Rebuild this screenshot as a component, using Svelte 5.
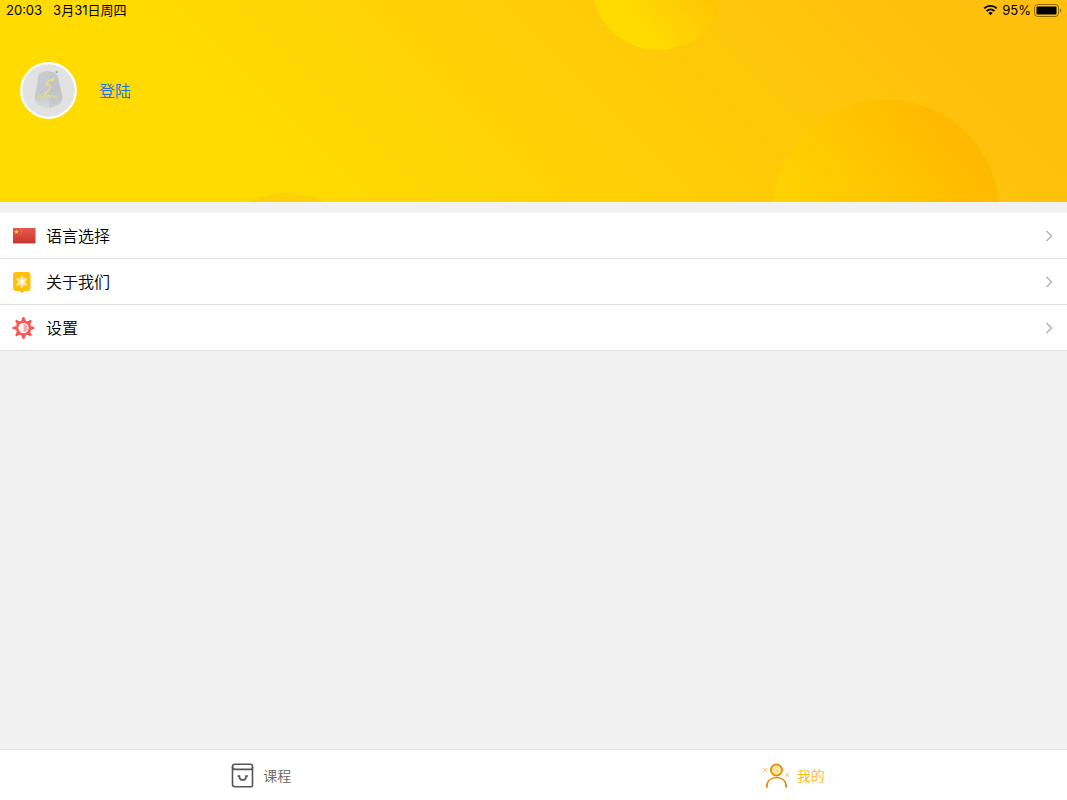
<script>
  const rows = [
    { id: 'language', label: '语言选择' },
    { id: 'about', label: '关于我们' },
    { id: 'settings', label: '设置' },
  ];
  const teeth = [0, 45, 90, 135, 180, 225, 270, 315];
  let tab = $state('mine');
</script>

<div class="screen">
  <header class="hero">
    <svg class="backdrop" viewBox="0 0 1067 202" preserveAspectRatio="xMidYMid slice" aria-hidden="true">
      <defs>
        <linearGradient id="sky" gradientUnits="userSpaceOnUse" x1="200" y1="100" x2="600" y2="-300">
          <stop offset="0" stop-color="#ffdb00" />
          <stop offset="1" stop-color="#ffc00d" />
        </linearGradient>
        <linearGradient id="top" gradientUnits="userSpaceOnUse" x1="640" y1="30" x2="700" y2="-20">
          <stop offset="0" stop-color="#ffdb00" />
          <stop offset="1" stop-color="#ffc305" />
        </linearGradient>
        <linearGradient id="right" gradientUnits="userSpaceOnUse" x1="785" y1="215" x2="925" y2="105">
          <stop offset="0" stop-color="#ffd400" />
          <stop offset="1" stop-color="#ffba00" />
        </linearGradient>
      </defs>
      <rect width="1067" height="202" fill="url(#sky)" />
      <circle cx="658" cy="-16" r="66" fill="url(#top)" />
      <circle cx="886" cy="213" r="113.500" fill="url(#right)" />
      <circle cx="287" cy="273" r="80" fill="#ffd008" />
    </svg>

    <div class="status">
      <span class="clock">20:03</span>
      <span class="date">3月31日周四</span>
      <svg class="wifi" width="15" height="12" viewBox="0 0 16 12" fill="none" stroke="#000" stroke-width="2" aria-hidden="true">
        <path d="M1.200 4.300C5 .7 11 .7 14.800 4.300" />
        <path d="M3.800 7.100c2.400-2.200 6-2.200 8.400 0" />
        <path d="M5.700 9.100c1.300-1.200 3.300-1.200 4.600 0L8 11.500z" fill="#000" stroke="none" />
      </svg>
      <span class="charge">95%</span>
      <svg class="battery" width="28" height="13" viewBox="0 0 28 13" aria-hidden="true">
        <rect x=".5" y=".5" width="24" height="12" rx="3.300" fill="none" stroke="#000" stroke-opacity=".45" />
        <rect x="2.500" y="2.500" width="20" height="8" rx="1" />
        <path d="M26 4.300c1.600.8 1.600 3.600 0 4.400z" opacity=".5" />
      </svg>
    </div>

    <div class="profile">
      <svg class="avatar" viewBox="0 0 57 57" aria-hidden="true">
        <defs>
          <linearGradient id="stone" x1="0" y1="0" x2="0" y2="1">
            <stop offset="0" stop-color="#c8ccd0" />
            <stop offset=".7" stop-color="#c6c9cb" />
            <stop offset="1" stop-color="#dcdddd" />
          </linearGradient>
        </defs>
        <circle cx="28.500" cy="28.500" r="27.300" fill="#e2e2e2" stroke="#fff" stroke-width="2.200" />
        <path d="M18 15l2-4 4-1.500 3-.5 6 1 5 4 1 7 3 11c1 4-.5 8-3 10-3 2.500-6 3.500-10 4-5-.5-9-1.500-12-4-2-2-3-5-2-9l2-9z" fill="url(#stone)" />
        <path d="M29 9.500l4 .5 5 4 1 7 3 11c1 4-.5 8-3 10-3 2.500-6 3.500-10 4z" fill="#b8bec3" opacity=".4" />
        <circle cx="36.500" cy="10" r="1.100" fill="#969ca2" />
        <g fill="none" stroke="#eadc92" stroke-linecap="round" stroke-linejoin="round">
          <path d="M34 16l-6 3 6-1M28 19l-2 4c5-1 7 1 1 7l-2 1" stroke-width="1.300" />
          <path d="M19 33l-1 3M21 35c4 0 4-4 1-3-3 1-3 5 1 4l4-7-2 7c2 0 2-3 4-3-3 0-3 4 0 2l1-2v3c1-2 3-4 3-2v2c1-2 3-3 4-2-3 1-2 3 2 1" stroke-width=".9" />
        </g>
      </svg>
      <a class="login" href="#login">登陆</a>
    </div>
  </header>

  <main>
    <nav class="list">
      {#each rows as row}
        <a class="row" href={'#' + row.id}>
          <span class="badge">
            {#if row.id === 'language'}
              <svg width="24" height="24" viewBox="0 0 24 24" aria-hidden="true">
                <defs>
                  <linearGradient id="flag" x1="0" y1="0" x2="0" y2="1">
                    <stop offset="0" stop-color="#e4594c" />
                    <stop offset="1" stop-color="#c9372d" />
                  </linearGradient>
                </defs>
                <rect x="1" y="4" width="22.500" height="15" fill="url(#flag)" />
                <path d="M1 19.200h22.500" stroke="#a83b34" stroke-width=".6" />
                <path d="M4.500 5.400l.7 1.600 1.800.1-1.400 1.200.5 1.700-1.600-1-1.600 1 .5-1.700L2 7.100l1.800-.1z" fill="#ffd34f" />
                <g fill="#ec8138">
                  <circle cx="8" cy="5.500" r=".7" /><circle cx="9.500" cy="7" r=".7" />
                  <circle cx="9.500" cy="9" r=".7" /><circle cx="8" cy="10.500" r=".7" />
                </g>
              </svg>
            {:else if row.id === 'about'}
              <svg width="24" height="24" viewBox="0 0 24 24" aria-hidden="true">
                <path d="M4 2h11.500a3 3 0 0 1 3 3v13a3 3 0 0 1-3 3h-3l-2.700 2-2.700-2H4a3 3 0 0 1-3-3V5a3 3 0 0 1 3-3z" fill="#ffc107" />
                <path d="M9.800 4.500l1.700 3.700 4.100-.2-2 3.700 2 3.700-4.100-.2-1.700 3.700-1.700-3.700-4.100.2 2-3.700-2-3.700 4.100.2z" fill="#ffe79a" />
                <circle cx="9.800" cy="11.700" r="2.200" fill="#fffdf2" />
              </svg>
            {:else}
              <svg width="24" height="24" viewBox="0 0 24 24" aria-hidden="true">
                <g fill="#fb5353">
                  {#each teeth as angle}
                    <path d="M8.500 5.200q1.600-.9 1.700-3 .1-1.200 1.300-1.200t1.300 1.200q.1 2.100 1.700 3z" transform="rotate({angle} 11.500 12)" />
                  {/each}
                </g>
                <circle cx="11.500" cy="12" r="6.300" fill="#fff" stroke="#fb5353" stroke-width="2.200" />
                <path d="M11.500 8a4 4 0 0 0 0 8z" fill="#fff3f3" />
                <path d="M11.500 8a4 4 0 0 1 0 8z" fill="#fda5a5" />
              </svg>
            {/if}
          </span>
          <span class="label">{row.label}</span>
          <svg class="chevron" width="8" height="12" viewBox="0 0 8 12" fill="none" stroke="#b5b5b5" stroke-width="1.500" aria-hidden="true">
            <path d="M1.500 1l5 5-5 5" />
          </svg>
        </a>
      {/each}
    </nav>
  </main>

  <nav class="tabs">
    <button class:active={tab === 'course'} onclick={() => (tab = 'course')}>
      <svg width="28" height="28" viewBox="0 0 28 28" fill="none" stroke="#555" stroke-width="1.600" stroke-linecap="round" aria-hidden="true">
        <path d="M7 3.200h15.500q2 0 2 2v19q0 1.500-1.500 1.500H7q-2.500 0-2.500-2.500V5.700q0-2.500 2.500-2.500z" />
        <path d="M4.500 5.700q0 2.700 2.700 2.700h15.300q2 0 2-2" />
        <path d="M10 15h1.400v.7q0 3.300 3.300 3.300t3.300-3.300V15h1.400" stroke-width="1.700" />
      </svg>
      <span>课程</span>
    </button>
    <button class:active={tab === 'mine'} onclick={() => (tab = 'mine')}>
      <svg width="28" height="28" viewBox="0 0 28 28" fill="none" stroke="#e68a08" stroke-linecap="round" aria-hidden="true">
        <circle cx="14.500" cy="9" r="5.600" fill="#ffe49c" stroke-width="1.700" />
        <path d="M4.800 26c0-6 4-9.500 9.700-9.500s9.700 3.500 9.700 9.500" stroke-width="1.700" />
        <path d="M1.300 7l4 4M5.300 7l-4 4M23.800 12.500l3 3M26.800 12.500l-3 3" stroke="#f5b85f" stroke-width="1" />
      </svg>
      <span>我的</span>
    </button>
  </nav>
</div>

<style>
  :global(body) {
    margin: 0;
  }
  .screen {
    display: flex;
    flex-direction: column;
    min-height: 100vh;
    background: #f1f1f1;
    color: #000;
    font-family: "Noto Sans CJK SC", sans-serif;
  }
  a {
    text-decoration: none;
    color: inherit;
  }
  svg {
    display: block;
    flex: none;
  }
  .hero {
    position: relative;
    padding-bottom: 83px;
    overflow: hidden;
  }
  .backdrop {
    position: absolute;
    inset: 0;
    width: 100%;
    height: 100%;
  }
  .status {
    position: relative;
    display: flex;
    align-items: center;
    height: 20px;
    padding: 0 5px 0 6px;
    font-family: Inter, "Noto Sans CJK SC", sans-serif;
    font-size: 13px;
    line-height: 20px;
  }
  .date {
    margin-left: 11px;
  }
  .wifi {
    margin-left: auto;
  }
  .charge {
    margin: 0 3px 0 4px;
  }
  .profile {
    position: relative;
    display: flex;
    align-items: center;
    gap: 22px;
    padding: 42px 20px 0;
  }
  .avatar {
    width: 57px;
    height: 57px;
  }
  .login {
    padding-bottom: 2px;
    color: #1c74d8;
    font-size: 16px;
    line-height: 24px;
    font-weight: 350;
  }
  main {
    flex: 1;
    padding-top: 10px;
  }
  .list {
    border-top: 1px solid #f8f8f8;
    background: #fff;
  }
  .row {
    box-sizing: border-box;
    display: flex;
    align-items: center;
    height: 46px;
    padding: 0 14px 0 12px;
    border-bottom: 1px solid #e0e0e0;
    font-size: 16px;
    line-height: 24px;
    font-weight: 350;
  }
  .label {
    flex: 1;
    margin-left: 10px;
    padding-bottom: 2px;
  }
  .tabs {
    display: flex;
    height: 50px;
    border-top: 1px solid #e4e4e4;
    background: #fff;
  }
  button {
    flex: 1;
    display: flex;
    align-items: center;
    justify-content: center;
    gap: 7px;
    padding: 0 14px 0 0;
    border: 0;
    background: none;
    color: #666;
    font: 350 14px/20px "Noto Sans CJK SC", sans-serif;
    cursor: pointer;
  }
  button.active {
    color: #fdb913;
  }
</style>
